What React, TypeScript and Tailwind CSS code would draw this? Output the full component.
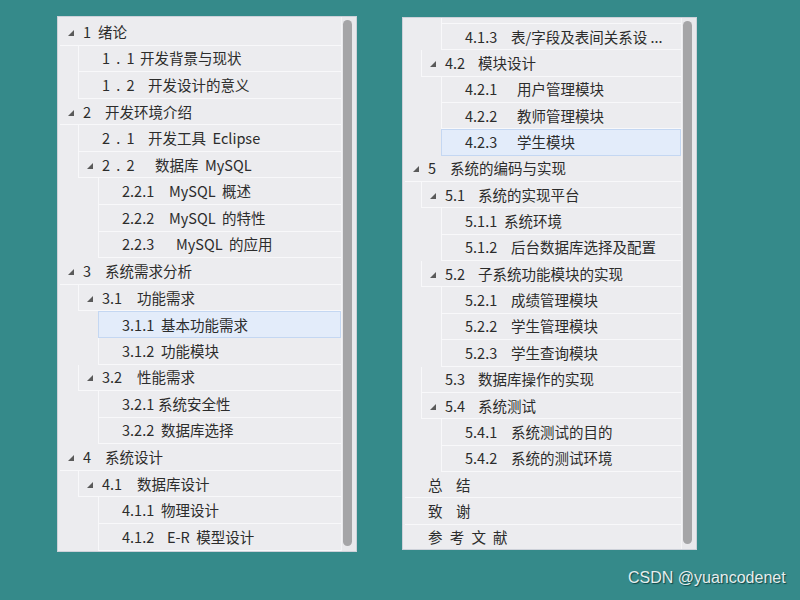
import React from "react";

type Item = {
  level: 0 | 1 | 2;
  tri?: boolean;
  num?: string;
  numCls?: string;
  title: string;
  titleCls?: string;
  hl?: boolean;
};

const leftItems: Item[] = [
  { level: 0, tri: true, num: "1", numCls: "w-[15px]", title: "绪论" },
  { level: 1, num: "1 . 1", numCls: "w-[38px] tracking-[1.5px]", title: "开发背景与现状" },
  { level: 1, num: "1 . 2", numCls: "w-[46px] tracking-[1.5px]", title: "开发设计的意义" },
  { level: 0, tri: true, num: "2", numCls: "w-[22px]", title: "开发环境介绍" },
  { level: 1, num: "2 . 1", numCls: "w-[46px] tracking-[1.5px]", title: "开发工具  Eclipse" },
  { level: 1, tri: true, num: "2 . 2", numCls: "w-[53px] tracking-[1.5px]", title: "数据库  MySQL" },
  { level: 2, num: "2.2.1", numCls: "w-[47px]", title: "MySQL  概述" },
  { level: 2, num: "2.2.2", numCls: "w-[47px]", title: "MySQL  的特性" },
  { level: 2, num: "2.2.3", numCls: "w-[54px]", title: "MySQL  的应用" },
  { level: 0, tri: true, num: "3", numCls: "w-[22px]", title: "系统需求分析" },
  { level: 1, tri: true, num: "3.1", numCls: "w-[35px]", title: "功能需求" },
  { level: 2, num: "3.1.1", numCls: "w-[39px]", title: "基本功能需求", hl: true },
  { level: 2, num: "3.1.2", numCls: "w-[39px]", title: "功能模块" },
  { level: 1, tri: true, num: "3.2", numCls: "w-[35px]", title: "性能需求" },
  { level: 2, num: "3.2.1", numCls: "w-[36px]", title: "系统安全性" },
  { level: 2, num: "3.2.2", numCls: "w-[39px]", title: "数据库选择" },
  { level: 0, tri: true, num: "4", numCls: "w-[22px]", title: "系统设计" },
  { level: 1, tri: true, num: "4.1", numCls: "w-[35px]", title: "数据库设计" },
  { level: 2, num: "4.1.1", numCls: "w-[39px]", title: "物理设计" },
  { level: 2, num: "4.1.2", numCls: "w-[45px]", title: "E-R  模型设计" },
  { level: 2, num: "4.1.3", numCls: "w-[46px]", title: "表/字段及表间关系设 ..." },
];

const rightItems: Item[] = [
  { level: 2, num: "4.1.2", numCls: "w-[45px]", title: "E-R  模型设计" },
  { level: 2, num: "4.1.3", numCls: "w-[46px]", title: "表/字段及表间关系设 ..." },
  { level: 1, tri: true, num: "4.2", numCls: "w-[33px]", title: "模块设计" },
  { level: 2, num: "4.2.1", numCls: "w-[52px]", title: "用户管理模块" },
  { level: 2, num: "4.2.2", numCls: "w-[52px]", title: "教师管理模块" },
  { level: 2, num: "4.2.3", numCls: "w-[52px]", title: "学生模块", hl: true },
  { level: 0, tri: true, num: "5", numCls: "w-[22px]", title: "系统的编码与实现" },
  { level: 1, tri: true, num: "5.1", numCls: "w-[33px]", title: "系统的实现平台" },
  { level: 2, num: "5.1.1", numCls: "w-[39px]", title: "系统环境" },
  { level: 2, num: "5.1.2", numCls: "w-[46px]", title: "后台数据库选择及配置" },
  { level: 1, tri: true, num: "5.2", numCls: "w-[33px]", title: "子系统功能模块的实现" },
  { level: 2, num: "5.2.1", numCls: "w-[46px]", title: "成绩管理模块" },
  { level: 2, num: "5.2.2", numCls: "w-[46px]", title: "学生管理模块" },
  { level: 2, num: "5.2.3", numCls: "w-[46px]", title: "学生查询模块" },
  { level: 1, num: "5.3", numCls: "w-[33px]", title: "数据库操作的实现" },
  { level: 1, tri: true, num: "5.4", numCls: "w-[33px]", title: "系统测试" },
  { level: 2, num: "5.4.1", numCls: "w-[46px]", title: "系统测试的目的" },
  { level: 2, num: "5.4.2", numCls: "w-[46px]", title: "系统的测试环境" },
  { level: 0, title: "总结", titleCls: "tracking-[13.5px]" },
  { level: 0, title: "致谢", titleCls: "tracking-[13.5px]" },
  { level: 0, title: "参考文献", titleCls: "tracking-[7.2px]" },
];

function Triangle() {
  return (
    <svg width="6" height="6" viewBox="0 0 6 6" className="block">
      <polygon points="6,0 6,6 0,6" fill="#5a5a5a" />
    </svg>
  );
}

function Row({ item, side }: { item: Item; side: "left" | "right" }) {
  const indent =
    side === "left"
      ? item.level === 0
        ? "ml-0"
        : item.level === 1
        ? "ml-[18px]"
        : "ml-[38px]"
      : item.level === 0
      ? "ml-0"
      : item.level === 1
      ? "ml-[16px]"
      : "ml-[36px]";
  const height = side === "left" ? "h-[26.58px]" : "h-[26.37px]";
  const box = item.hl
    ? "bg-[#e3ecfa] border border-[#c4d7f2]"
    : item.level === 0
    ? "border-b border-[#f8f8fa]"
    : "border-b border-l border-[#f8f8fa]";
  return (
    <div className={`flex items-center shrink-0 overflow-hidden ${height} ${indent} ${box}`}>
      <div className="w-[23px] shrink-0 flex items-center pl-[8px] pt-[2px]">
        {item.tri ? <Triangle /> : null}
      </div>
      <div className="flex items-center min-w-0 whitespace-pre text-[14.5px] leading-[20px] text-[#2c2c2c]">
        {item.num ? (
          <span className={`inline-block shrink-0 ${item.numCls ?? ""}`}>{item.num}</span>
        ) : null}
        <span className={`${item.titleCls ?? ""}`}>{item.title}</span>
      </div>
    </div>
  );
}

function ScrollBar() {
  return (
    <div className="w-[15px] shrink-0 flex pt-[3px] pb-[5px] pl-[1px] pr-[4px] bg-[#e9e9ec] border-l border-[#f4f4f6]">
      <div className="flex-1 rounded-full bg-[#a5a5a7]" />
    </div>
  );
}

function Panel({
  items,
  side,
}: {
  items: Item[];
  side: "left" | "right";
}) {
  const size = side === "left" ? "w-[300px] h-[536px]" : "w-[295px] h-[533px] mt-[1px]";
  const inner = side === "left" ? "pt-[2px]" : "-mt-[20.5px]";
  return (
    <div className={`${size} flex bg-[#ececef] border border-[#cdd1d9] shrink-0`}>
      <div className="flex-1 overflow-hidden pl-[2px]">
        <div className={`flex flex-col ${inner}`}>
          {items.map((it, i) => (
            <Row key={i} item={it} side={side} />
          ))}
        </div>
      </div>
      <ScrollBar />
    </div>
  );
}

export default function App() {
  return (
    <div className="relative w-[800px] h-[600px] overflow-hidden bg-[#358a8a] font-['Noto_Sans_CJK_SC','Noto_Sans',sans-serif]">
      <div className="flex items-start gap-[45px] pl-[57px] pt-[16px]">
        <Panel items={leftItems} side="left" />
        <Panel items={rightItems} side="right" />
      </div>
      <div className="absolute left-[628px] top-[570px] text-[16px] leading-none text-[#e6eeee] font-['Liberation_Sans',sans-serif] [text-shadow:1px_1px_1px_rgba(0,40,40,0.7)]">
        CSDN @yuancodenet
      </div>
    </div>
  );
}
